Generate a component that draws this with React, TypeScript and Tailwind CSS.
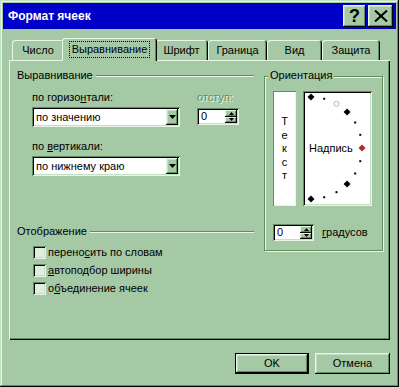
import React from 'react';

const raised =
  'shadow-[inset_-1px_-1px_#000,inset_1px_1px_#e8f6e8,inset_-2px_-2px_#628c62,inset_2px_2px_#c4e0c4]';
const raisedSmall = 'shadow-[inset_-1px_-1px_#000,inset_1px_1px_#e8f6e8,inset_-2px_-2px_#628c62]';
const sunken =
  'shadow-[inset_1px_1px_#628c62,inset_-1px_-1px_#e8f6e8,inset_2px_2px_#000,inset_-2px_-2px_#c4e0c4]';

function Header({ children, className = '' }: { children: React.ReactNode; className?: string }) {
  return (
    <div className={`flex items-center h-[13px] ${className}`}>
      <span>{children}</span>
      <div className="flex-1 ml-[3px] h-[2px] border-t border-t-[#628c62] border-b border-b-[#e8f6e8]" />
    </div>
  );
}

function Arrow({ up }: { up?: boolean }) {
  return (
    <svg width="5" height="3" viewBox="0 0 5 3">
      <polygon points={up ? '0,3 2.5,0 5,3' : '0,0 5,0 2.5,3'} fill="#000" />
    </svg>
  );
}

function Spinner({ className }: { className: string }) {
  return (
    <div className={`${sunken} bg-white h-[17px] p-[2px] flex ${className}`}>
      <span className="flex-1 pl-[2px] leading-[13px]">0</span>
      <div className="w-[12px] flex flex-col">
        <div className={`flex-1 bg-[#a5c9a5] ${raisedSmall} flex items-center justify-center`}>
          <Arrow up />
        </div>
        <div className={`flex-1 bg-[#a5c9a5] ${raisedSmall} flex items-center justify-center`}>
          <Arrow />
        </div>
      </div>
    </div>
  );
}

function Combo({ value }: { value: string }) {
  return (
    <div className={`${sunken} bg-white h-[20px] w-[148px] p-[2px] flex`}>
      <span className="flex-1 pl-[2px] flex items-center">{value}</span>
      <div className={`w-[12px] bg-[#a5c9a5] ${raised} flex items-center justify-center`}>
        <svg width="7" height="4" viewBox="0 0 7 4">
          <polygon points="0,0 7,0 3.5,4" fill="#000" />
        </svg>
      </div>
    </div>
  );
}

function Check({ children }: { children: React.ReactNode }) {
  return (
    <div className="flex items-center h-[13px]">
      <div className={`w-[13px] h-[13px] bg-[#dfeedf] ${sunken}`} />
      <span className="ml-[2px]">{children}</span>
    </div>
  );
}

function Tab({ className, children }: { className: string; children: React.ReactNode }) {
  return (
    <div
      className={`h-[20px] bg-[#a5c9a5] rounded-t-[3px] shadow-[inset_1px_1px_#e8f6e8,inset_-1px_0_#000,inset_-2px_0_#628c62] flex items-center justify-center pt-[1px] ${className}`}
    >
      {children}
    </div>
  );
}

const U = ({ children }: { children: React.ReactNode }) => (
  <span className="underline underline-offset-[1px]">{children}</span>
);

export default function App() {
  const cx = 8;
  const cy = 57;
  const r = 51;
  const pts = [90, 75, 60, 45, 30, 15, 0, -15, -30, -45, -60, -75, -90].map((a) => {
    const rad = (a * Math.PI) / 180;
    return { a, x: cx + r * Math.cos(rad), y: cy - r * Math.sin(rad) };
  });

  return (
    <div className="w-[399px] h-[387px] bg-[#a5c9a5] p-[3px] flex flex-col font-['Liberation_Sans',Arial,sans-serif] text-[11px] leading-[13px] text-black shadow-[inset_-1px_-1px_#000,inset_1px_1px_#c4e0c4,inset_-2px_-2px_#628c62,inset_2px_2px_#e8f6e8]">
      {/* Title bar */}
      <div className="h-[26px] bg-[#0000c8] flex items-center pl-[5px] pr-[3px]">
        <span className="text-white font-bold text-[12px] flex-1">Формат ячеек</span>
        <div className={`w-[23px] h-[22px] bg-[#a5c9a5] ${raised} flex items-center justify-center font-bold text-[18px] leading-none`}>
          ?
        </div>
        <div className={`w-[25px] h-[22px] ml-[2px] bg-[#a5c9a5] ${raised} flex items-center justify-center`}>
          <svg width="14" height="12" viewBox="0 0 14 12">
            <line x1="1" y1="0.5" x2="13" y2="11.5" stroke="#000" strokeWidth="2" />
            <line x1="13" y1="0.5" x2="1" y2="11.5" stroke="#000" strokeWidth="2" />
          </svg>
        </div>
      </div>

      {/* Tabs */}
      <div className="mt-[9px] ml-[9px] h-[22px] flex items-end relative z-10">
        <Tab className="w-[52px]">Число</Tab>
        <div className="-ml-[2px] w-[95px] h-[23px] -mb-[1px] relative z-10 bg-[#a5c9a5] rounded-t-[3px] shadow-[inset_1px_1px_#e8f6e8,inset_-1px_0_#000,inset_-2px_0_#628c62] flex items-center justify-center">
          <span className="border border-dotted border-black px-[2px] py-[1px]">Выравнивание</span>
        </div>
        <Tab className="-ml-[2px] w-[53px]">Шрифт</Tab>
        <Tab className="w-[59px]">Граница</Tab>
        <Tab className="w-[55px]">Вид</Tab>
        <Tab className="w-[58px]">Защита</Tab>
      </div>

      {/* Panel */}
      <div className="ml-[6px] w-[381px] h-[280px] bg-[#a5c9a5] shadow-[inset_1px_1px_#e8f6e8,inset_-1px_-1px_#000,inset_-2px_-2px_#628c62] flex pt-[9px] pl-[8px]">
        {/* Left column */}
        <div className="w-[237px] flex flex-col">
          <Header>Выравнивание</Header>
          <div className="mt-[9px] pl-[15px] flex">
            <div className="flex flex-col w-[148px]">
              <span>
                по горизо<U>н</U>тали:
              </span>
              <div className="mt-[3px]">
                <Combo value="по значению" />
              </div>
              <span className="mt-[13px]">
                по <U>в</U>ертикали:
              </span>
              <div className="mt-[3px]">
                <Combo value="по нижнему краю" />
              </div>
            </div>
            <div className="ml-[17px] flex flex-col">
              <span className="text-[#628c62] [text-shadow:1px_1px_#e8f6e8]">отступ:</span>
              <div className="mt-[4px]">
                <Spinner className="w-[42px]" />
              </div>
            </div>
          </div>

          <Header className="mt-[49px]">Отображение</Header>
          <div className="mt-[8px] pl-[16px] flex flex-col gap-[5px]">
            <Check>
              перено<U>с</U>ить по словам
            </Check>
            <Check>
              <U>а</U>втоподбор ширины
            </Check>
            <Check>
              о<U>б</U>ъединение ячеек
            </Check>
          </div>
        </div>

        {/* Orientation frame */}
        <div className="ml-[10px] mt-[7px] w-[119px] h-[175px] relative border border-[#628c62] shadow-[inset_1px_1px_#e8f6e8,1px_1px_#e8f6e8] pt-[14px] pl-[8px]">
          <span className="absolute top-[-8px] left-[3px] px-[2px] bg-[#a5c9a5]">Ориентация</span>
          <div className="flex">
            <div className="w-[23px] h-[115px] bg-white shadow-[inset_1px_1px_#628c62,inset_-1px_-1px_#e8f6e8] flex flex-col items-center justify-center leading-[13.5px] pt-[1px]">
              <span>Т</span>
              <span>е</span>
              <span>к</span>
              <span>с</span>
              <span>т</span>
            </div>
            <div className={`ml-[7px] w-[69px] h-[115px] bg-white relative ${sunken} flex items-center pl-[6px]`}>
              <svg className="absolute inset-0" width="69" height="115" viewBox="0 0 69 115">
                {pts.map((p) => {
                  if (p.a % 45 === 0) {
                    const red = p.a === 0;
                    return (
                      <polygon
                        key={p.a}
                        points={`${p.x},${p.y - 3.5} ${p.x + 3.5},${p.y} ${p.x},${p.y + 3.5} ${p.x - 3.5},${p.y}`}
                        fill={red ? '#b02c2c' : '#000'}
                      />
                    );
                  }
                  if (p.a === 60) {
                    return (
                      <circle key={p.a} cx={p.x} cy={p.y} r="2.5" fill="#fff" stroke="#b8b8b8" strokeWidth="1" />
                    );
                  }
                  return <rect key={p.a} x={p.x - 1} y={p.y - 1} width="2" height="2" fill="#000" />;
                })}
              </svg>
              <span className="relative">Надпись</span>
            </div>
          </div>
          <div className="mt-[18px] flex items-center">
            <Spinner className="w-[41px]" />
            <span className="ml-[8px]">
              <U>г</U>радусов
            </span>
          </div>
        </div>
      </div>

      {/* Buttons */}
      <div className="mt-[13px] flex justify-end pr-[6px]">
        <div className="w-[74px] h-[21px] border border-black">
          <div className={`w-full h-full bg-[#a5c9a5] ${raised} flex items-center justify-center`}>OK</div>
        </div>
        <div className={`ml-[6px] w-[75px] h-[21px] bg-[#a5c9a5] ${raised} flex items-center justify-center`}>
          Отмена
        </div>
      </div>
    </div>
  );
}
